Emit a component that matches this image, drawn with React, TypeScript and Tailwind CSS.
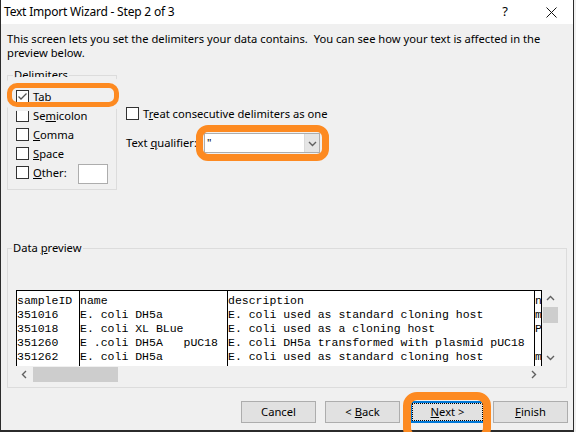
import React from "react";

const rows = [
  ["sampleID", "name", "description", "notes"],
  ["351016", "E. coli DH5a", "E. coli used as standard cloning host", "m"],
  ["351018", "E. coli XL BLue", "E. coli used as a cloning host", "P"],
  ["351260", "E .coli DH5A   pUC18", "E. coli DH5a transformed with plasmid pUC18", ""],
  ["351262", "E. coli DH5a", "E. coli used as standard cloning host", "m"],
];

function Check({ checked }: { checked?: boolean }) {
  return (
    <span className="flex h-[13px] w-[13px] shrink-0 items-center justify-center border border-[#333] bg-white">
      {checked && (
        <svg width="11" height="11" viewBox="0 0 11 11">
          <path d="M1.5 5.5 L4 8 L9.5 2.5" stroke="#555" strokeWidth="1.3" fill="none" />
        </svg>
      )}
    </span>
  );
}

function CheckRow({ label, checked }: { label: React.ReactNode; checked?: boolean }) {
  return (
    <div className="flex h-[19px] items-center gap-[4px]">
      <Check checked={checked} />
      <span className="whitespace-nowrap leading-[14px]">{label}</span>
    </div>
  );
}

function Chevron({ dir }: { dir: "up" | "down" | "left" | "right" }) {
  const d = {
    up: "M1 6 L4.5 2.5 L8 6",
    down: "M1 3 L4.5 6.5 L8 3",
    left: "M6 1 L2.5 4.5 L6 8",
    right: "M3 1 L6.5 4.5 L3 8",
  }[dir];
  return (
    <svg width="9" height="9" viewBox="0 0 9 9">
      <path d={d} stroke="#606060" strokeWidth="1.4" fill="none" />
    </svg>
  );
}

function Button({ children, focused, className }: { children: React.ReactNode; focused?: boolean; className?: string }) {
  return (
    <div
      className={
        "flex h-[22px] w-[75px] items-center justify-center whitespace-nowrap bg-[#e1e1e1] " +
        (focused ? "border-2 border-[#0078d7] " : "border border-[#adadad] ") +
        (className ?? "")
      }
    >
      {focused ? (
        <div className="flex h-full w-full items-center justify-center border border-dotted border-black">{children}</div>
      ) : (
        children
      )}
    </div>
  );
}

export default function App() {
  const cols = [
    { w: "w-[63px]", i: 0 },
    { w: "w-[148px]", i: 1 },
    { w: "w-[307px]", i: 2 },
  ];
  return (
    <div className="h-[432px] w-[576px] overflow-hidden bg-[#f0f0f0] font-['Noto_Sans',sans-serif] text-[11.2px] text-black">
      <div className="relative flex h-[432px] w-[574px] flex-col border-b-2 border-l border-r border-[#2b2b2b]">
        {/* title bar */}
        <div className="flex h-[24px] shrink-0 items-center bg-white pl-[3px]">
          <span className="text-[12px] leading-[14px] tracking-[-0.2px]">Text Import Wizard - Step 2 of 3</span>
          <span className="ml-auto text-[13px]">?</span>
          <svg className="ml-[38px] mr-[16px]" width="11" height="11" viewBox="0 0 11 11">
            <path d="M0.5 0.5 L10.5 10.5 M10.5 0.5 L0.5 10.5" stroke="#111" strokeWidth="1" />
          </svg>
        </div>

        <div className="flex flex-1 flex-col bg-[#f0f0f0]">
          <div className="whitespace-nowrap pl-[6px] pt-[8px] leading-[14px]">
            This screen lets you set the delimiters your data contains.&nbsp; You can see how your text is affected in the
            <br />
            preview below.
          </div>

          <div className="mt-[8px] flex">
            <fieldset className="ml-[6px] h-[122px] w-[110px] border border-[#dcdcdc] pl-[8px] pt-[5px]">
              <legend className="ml-[-3px] px-[1px] leading-[14px]">Delimiters</legend>
              <CheckRow checked label={<><u>T</u>ab</>} />
              <CheckRow label={<>Se<u>m</u>icolon</>} />
              <CheckRow label={<><u>C</u>omma</>} />
              <CheckRow label={<><u>S</u>pace</>} />
              <div className="flex h-[19px] items-center gap-[4px]">
                <Check />
                <span className="leading-[14px]"><u>O</u>ther:</span>
                <div className="ml-auto mr-[8px] mt-[2px] h-[20px] w-[30px] border border-[#adadad] bg-white" />
              </div>
            </fieldset>

            <div className="ml-[9px] mt-[36px] flex flex-col">
              <CheckRow label={<>T<u>r</u>eat consecutive delimiters as one</>} />
              <div className="mt-[10px] flex h-[20px] items-center">
                <span className="w-[78px] whitespace-nowrap leading-[14px]">Text <u>q</u>ualifier:</span>
                <div className="flex h-[20px] w-[116px] items-center border border-[#adadad] bg-white">
                  <span className="pl-[2px] text-[11px]">"</span>
                  <div className="ml-auto flex h-full w-[15px] items-center justify-center border-l border-[#dadada] bg-[#e5e5e5]">
                    <Chevron dir="down" />
                  </div>
                </div>
              </div>
            </div>
          </div>

          <fieldset className="ml-[6px] mt-[51px] h-[147px] w-[560px] border border-[#dcdcdc] pl-[8px] pt-[35px]">
            <legend className="ml-[-4px] px-[1px] leading-[14px]">
              Data <u>p</u>review
            </legend>
            <div className="flex w-[543px]">
              <div className="flex w-[526px] flex-col">
                <div className="flex h-[76px] border-l border-r border-t border-black bg-white font-['Liberation_Mono',monospace] text-[11.5px]">
                  {cols.map((c) => (
                    <div key={c.i} className={c.w + " shrink-0 overflow-hidden border-r border-black pt-[3px]"}>
                      {rows.map((r, j) => (
                        <div key={j} className="h-[14px] whitespace-pre leading-[14px]">
                          {r[c.i]}
                        </div>
                      ))}
                    </div>
                  ))}
                  <div className="flex-1 overflow-hidden pt-[3px]">
                    {rows.map((r, j) => (
                      <div key={j} className="h-[14px] whitespace-pre leading-[14px]">
                        {r[3]}
                      </div>
                    ))}
                  </div>
                </div>
                <div className="flex h-[17px] items-center">
                  <div className="flex w-[17px] items-center justify-center">
                    <Chevron dir="left" />
                  </div>
                  <div className="h-[15px] w-[85px] bg-[#cdcdcd]" />
                  <div className="ml-auto flex w-[17px] items-center justify-center">
                    <Chevron dir="right" />
                  </div>
                </div>
              </div>
              <div className="flex h-[76px] w-[17px] flex-col items-center">
                <div className="flex h-[17px] items-center justify-center">
                  <Chevron dir="up" />
                </div>
                <div className="h-[16px] w-[15px] bg-[#cdcdcd]" />
                <div className="mt-auto flex h-[17px] items-center justify-center">
                  <Chevron dir="down" />
                </div>
              </div>
            </div>
          </fieldset>

          <div className="mt-[13px] flex pl-[240px]">
            <Button>Cancel</Button>
            <Button className="ml-[9px]">
              &lt; <u className="ml-[3px]">B</u>ack
            </Button>
            <Button focused className="ml-[10px]">
              <u>N</u>ext &gt;
            </Button>
            <Button className="ml-[8px]">
              <u>F</u>inish
            </Button>
          </div>
        </div>

        {/* annotation highlights */}
        <div className="absolute left-[6px] top-[83px] h-[24px] w-[112px] rounded-[10px] border-[5px] border-[#fd8a21] shadow-[0_-1px_0_5px_#f0f0f0]" />
        <div className="absolute left-[195px] top-[125px] h-[36px] w-[133px] rounded-[12px] border-[7px] border-[#fd8a21]" />
        <div className="absolute left-[402px] top-[392px] h-[50px] w-[88px] rounded-[14px] border-[8px] border-[#fd8a21]" />
      </div>
    </div>
  );
}
